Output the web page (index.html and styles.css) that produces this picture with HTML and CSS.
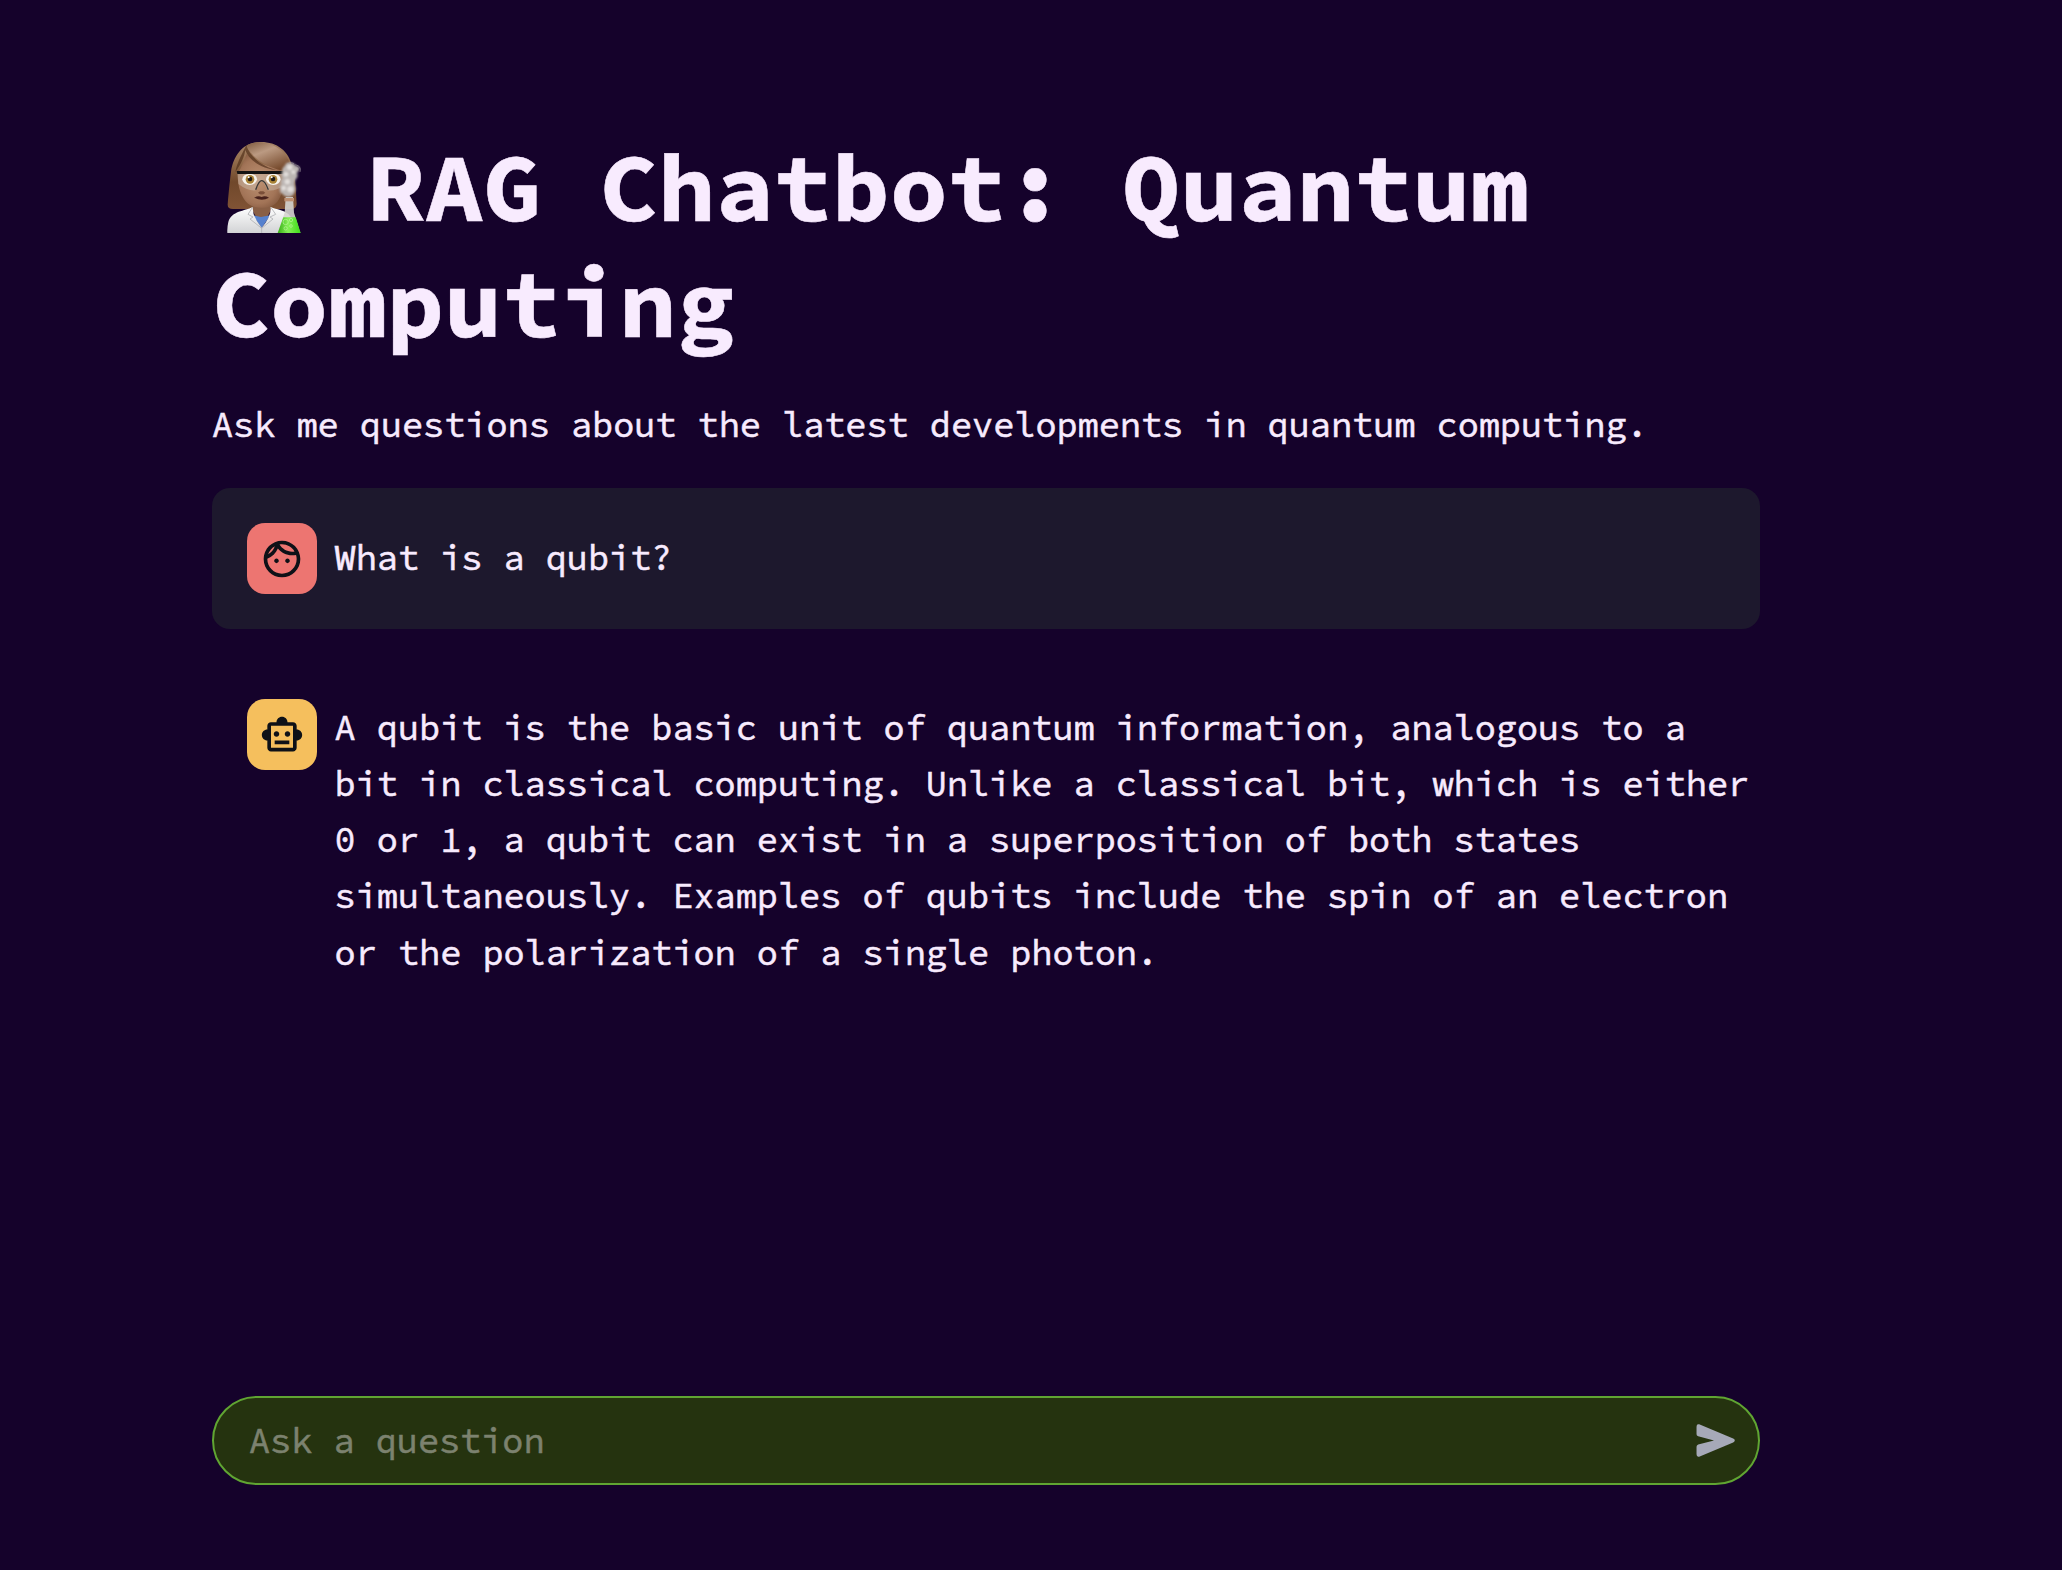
FILE: index.html
```html
<!DOCTYPE html>
<html lang="en">
<head>
<meta charset="utf-8">
<title>RAG Chatbot: Quantum Computing</title>
<link rel="stylesheet" href="styles.css">
</head>
<body>
<main class="page">
  <h1 class="title"><svg class="scientist" viewBox="80 36 222 273" role="img" aria-label="Scientist">
    <defs>
      <linearGradient id="hair" x1="0" y1="0" x2="0" y2="1"><stop offset="0" stop-color="#a68468"/><stop offset=".25" stop-color="#96704f"/><stop offset=".6" stop-color="#70482b"/><stop offset="1" stop-color="#805335"/></linearGradient>
      <linearGradient id="fringe" x1="0" y1="0" x2=".6" y2="1"><stop offset="0" stop-color="#7f5a3e"/><stop offset=".4" stop-color="#bb9a82"/><stop offset="1" stop-color="#75492b"/></linearGradient>
      <radialGradient id="skin" cx=".45" cy=".5" r=".6"><stop offset="0" stop-color="#bd9273"/><stop offset=".7" stop-color="#a27457"/><stop offset="1" stop-color="#82573e"/></radialGradient>
      <linearGradient id="coat" x1="0" y1="0" x2="0" y2="1"><stop offset="0" stop-color="#ffffff"/><stop offset="1" stop-color="#d2d3d5"/></linearGradient>
      <linearGradient id="liquid" x1="0" y1="0" x2="1" y2="0"><stop offset="0" stop-color="#36ad16"/><stop offset=".45" stop-color="#84f055"/><stop offset="1" stop-color="#3ddc18"/></linearGradient>
      <filter id="soft" x="-20%" y="-20%" width="140%" height="140%"><feGaussianBlur stdDeviation="2.5"/></filter>
    </defs>
    <path fill="url(#hair)" d="M182 36C132 35 99 73 92 126C87 164 85 192 82 224Q82 237 98 237H276Q288 236 289 222C287 183 286 145 276 112C266 62 229 36 182 36Z"/>
    <path fill="#895f45" d="M157 204H211V242L184 292L157 242Z"/>
    <path fill="url(#skin)" d="M114 126C124 112 130 92 139 72C166 98 207 112 246 116C255 148 250 191 231 215C211 239 159 240 137 215C118 194 109 155 114 126Z"/>
    <path fill="url(#fringe)" d="M139 46C178 24 241 43 263 88C269 101 271 113 273 125C233 124 161 101 139 46Z"/>
    <path fill="#4d2d17" opacity=".65" d="M138 45C149 82 187 112 239 122C179 117 144 88 135 60C129 91 118 107 105 126C111 94 129 65 138 45Z"/>
    <path fill="#5681ce" d="M157 256L182 261L210 256L184 294Z"/>
    <path fill="url(#coat)" d="M157 231C133 244 94 242 84 276Q80 293 81 309H290Q286 274 264 252C249 240 231 239 211 231Q213 260 184 293Q156 260 157 231Z"/>
    <path fill="none" stroke="#b0b1b5" stroke-width="2.5" d="M157 231L143 253L158 261L149 267L184 295L218 267L209 261L226 253L211 231M184 295V309"/>
    <path fill="#d8cfc3" opacity=".38" d="M111 130H257L254 164Q228 184 202 181Q188 151 184 154Q179 151 166 181Q143 184 114 162Z"/>
    <ellipse cx="148" cy="148" rx="22" ry="17" fill="#f7f4ed"/><ellipse cx="219" cy="148" rx="22" ry="17" fill="#f7f4ed"/>
    <circle cx="149" cy="148" r="13" fill="#a98336"/><circle cx="218" cy="148" r="13" fill="#a98336"/>
    <circle cx="149" cy="147" r="7" fill="#211b18"/><circle cx="218" cy="147" r="7" fill="#211b18"/>
    <circle cx="145" cy="142" r="3" fill="#fff"/><circle cx="214" cy="142" r="3" fill="#fff"/>
    <path fill="#7b4f39" d="M173 188Q184 199 195 188L189 184H179Z"/>
    <path fill="#48211b" d="M162 203Q174 196 184 201Q194 196 206 203Q185 215 162 203Z"/>
    <path fill="#141312" d="M109 123H254V132H111Z"/>
    <path fill="none" stroke="#393836" stroke-width="4" d="M166 179Q176 151 185 152Q194 153 204 179"/>
    <path fill="#d5d4cf" opacity=".9" d="M256 201H278L281 248L300 309H232L253 248Z"/>
    <path fill="url(#liquid)" d="M249 262H286L301 309H232Z"/>
    <g fill="none" stroke="#b9f59c" stroke-width="2"><circle cx="256" cy="276" r="8"/><circle cx="272" cy="270" r="5"/><circle cx="256" cy="295" r="5"/><circle cx="272" cy="288" r="4"/></g>
    <path fill="#bd9072" d="M252 204H281V214H252Z"/>
    <g filter="url(#soft)">
      <path fill="#bcb6b3" d="M253 108Q257 96 270 98Q281 97 286 107Q300 108 297 119Q294 126 290 128Q295 140 286 148Q282 155 283 165Q289 178 282 189Q276 202 263 200Q252 201 248 193Q236 188 239 178Q234 169 243 164Q237 152 247 145Q239 134 246 127Q243 115 253 108Z"/>
      <g fill="#e4e0dd"><circle cx="268" cy="112" r="8"/><circle cx="257" cy="133" r="7"/><circle cx="279" cy="126" r="6"/><circle cx="261" cy="155" r="8"/><circle cx="250" cy="174" r="7"/><circle cx="270" cy="178" r="9"/></g>
    </g>
    <path fill="none" stroke="#a9a3a7" stroke-width="3" opacity=".5" d="M285 104Q305 109 299 126M261 101Q272 93 281 101"/>
  </svg> RAG Chatbot: Quantum Computing</h1>
  <p class="intro">Ask me questions about the latest developments in quantum computing.</p>
  <section class="message message-user">
    <div class="avatar avatar-user"><svg class="avatar-icon" viewBox="0 0 24 24"><path d="M10.25 13c0 .69-.56 1.25-1.25 1.25S7.75 13.69 7.75 13s.56-1.25 1.25-1.25 1.25.56 1.25 1.25zM15 11.75c-.69 0-1.25.56-1.25 1.25s.56 1.25 1.25 1.25 1.25-.56 1.25-1.25-.56-1.25-1.25-1.25zm7 .25c0 5.52-4.48 10-10 10S2 17.52 2 12 6.48 2 12 2s10 4.48 10 10zM10.66 4.12C12.06 6.44 14.6 8 17.5 8c.46 0 .91-.05 1.34-.12C17.44 5.56 14.9 4 12 4c-.46 0-.91.05-1.34.12zM4.42 9.47c1.71-.97 3.03-2.55 3.66-4.44C6.37 6 5.05 7.58 4.42 9.47zM20 12c0-.78-.12-1.53-.33-2.24-.7.15-1.42.24-2.17.24-3.13 0-5.92-1.44-7.76-3.69C8.69 8.87 6.6 10.88 4 11.86c.01.04 0 .09 0 .14 0 4.41 3.59 8 8 8s8-3.59 8-8z"/></svg></div>
    <p class="text">What is a qubit?</p>
  </section>
  <section class="message message-bot">
    <div class="avatar avatar-bot"><svg class="avatar-icon" viewBox="0 0 24 24"><path d="M20 9V7c0-1.1-.9-2-2-2h-3c0-1.66-1.34-3-3-3S9 3.34 9 5H6c-1.1 0-2 .9-2 2v2c-1.66 0-3 1.34-3 3s1.34 3 3 3v4c0 1.1.9 2 2 2h12c1.1 0 2-.9 2-2v-4c1.66 0 3-1.34 3-3s-1.34-3-3-3zm-2 10H6V7h12v12zm-9-6c-.83 0-1.5-.67-1.5-1.5S8.17 10 9 10s1.5.67 1.5 1.5S9.83 13 9 13zm7.5-1.5c0 .83-.67 1.5-1.5 1.5s-1.5-.67-1.5-1.5.67-1.5 1.5-1.5 1.5.67 1.5 1.5zM8 15h8v2H8v-2z"/></svg></div>
    <p class="text">A qubit is the basic unit of quantum information, analogous to a bit in classical computing. Unlike a classical bit, which is either 0 or 1, a qubit can exist in a superposition of both states simultaneously. Examples of qubits include the spin of an electron or the polarization of a single photon.</p>
  </section>
  <form class="composer">
    <input class="field" type="text" placeholder="Ask a question" aria-label="Ask a question">
    <button class="send" type="button" aria-label="Send"><svg class="send-icon" viewBox="0 0 117 100"><path d="M9 1Q1-1 1 8V31Q1 36 6 37L54 50L6 62Q1 64 1 69V92Q1 101 9 99L112 56Q117 53 117 50Q117 46 112 44Z"/></svg></button>
  </form>
</main>
</body>
</html>
```
FILE: styles.css
```css
* { box-sizing: border-box; }
body {
  margin: 0;
  background: #15022b;
  color: #f8ebfe;
  font-family: "Source Code Pro", "Noto Sans Mono CJK SC", "DejaVu Sans Mono", monospace;
  font-size: 35.2px;
  font-weight: 400;
  -webkit-text-stroke: 0.55px currentColor;
}
.page {
  display: flex;
  flex-direction: column;
  width: 1548px;
  height: 1570px;
  margin-left: 212px;
  padding: 129px 0 85px;
}
.title {
  margin: 0;
  font-size: 96.8px;
  font-weight: 700;
  line-height: 116px;
}
.scientist {
  display: inline-block;
  width: 74px;
  height: 91px;
  margin: 0 8px 0 15px;
  vertical-align: -12px;
}
.intro { margin: 36px 0 35px; line-height: 56px; }
.message {
  display: flex;
  gap: 17.6px;
  padding: 35px 0 35px 35px;
  border-radius: 18px;
}
.message-user { height: 141px; align-items: center; background: #1d182d; }
.message-bot { margin-top: 35px; align-items: flex-start; }
.avatar {
  display: flex;
  flex: none;
  align-items: center;
  justify-content: center;
  width: 70px;
  height: 71px;
  border-radius: 18px;
}
.avatar-user { background: #ed7571; }
.avatar-bot { background: #f5bf5d; }
.avatar-icon { width: 44px; height: 44px; fill: #0e1117; }
.text { flex: 1; margin: 0; line-height: 56.32px; }
.message-bot .text { padding-top: 0.5px; }
.composer {
  display: flex;
  align-items: center;
  height: 89px;
  margin-top: auto;
  padding: 0 23px 0 35px;
  border: 2px solid #60a532;
  border-radius: 45px;
  background: #25330f;
}
.field {
  flex: 1;
  min-width: 0;
  height: 60px;
  padding: 0;
  border: 0;
  outline: 0;
  background: none;
  color: inherit;
  font: inherit;
}
.field::placeholder { color: #7c826f; opacity: 1; }
.send { display: flex; padding: 0; border: 0; background: none; }
.send-icon { width: 39px; height: 33px; fill: #a6a9b8; }
```
